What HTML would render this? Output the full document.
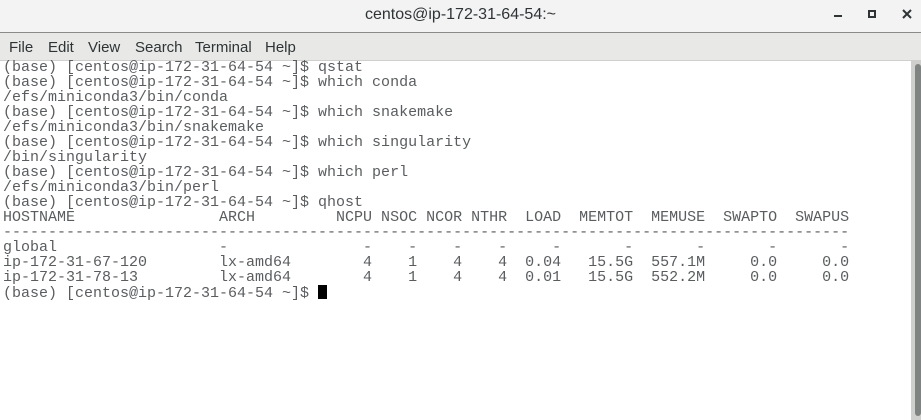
<!DOCTYPE html><html><head><style>
body{margin:0;width:921px;height:420px;overflow:hidden;background:#fff;position:relative;font-family:"Liberation Sans","DejaVu Sans",sans-serif}
.title{position:absolute;left:0;top:0;width:921px;height:32px;background:#f3f3f3;border-bottom:1px solid #8a8a88}
.title span{position:absolute;left:0;right:0;top:6px;text-align:center;font-size:16px;color:#2e3436}
.menu{position:absolute;top:33px;left:0;width:921px;height:27px;background:#e8e8e7;border-bottom:1px solid #cfcfcd}
.menu span{position:absolute;top:6px;font-size:15px;color:#2e3436}
pre{position:absolute;left:3px;top:60px;margin:0;font-family:"Liberation Mono",monospace;font-size:15px;line-height:15px;color:#5a5d5f}
.sb{position:absolute;left:911px;top:61px;width:10px;height:359px;background:#cfcfcd}
.th{position:absolute;left:915px;top:64px;width:6px;height:352px;background:#7f8381;border-radius:3px}
.cur{display:inline-block;width:9px;height:14px;background:#000;vertical-align:-2px}
</style></head><body>
<div class="title"><span>centos@ip-172-31-64-54:~</span>
<div style="position:absolute;left:834px;top:15px;width:8px;height:2px;background:#2e3436"></div>
<div style="position:absolute;left:868px;top:10px;width:4px;height:4px;border:2px solid #2e3436"></div>
<svg style="position:absolute;left:902px;top:9px" width="10" height="10"><path d="M1 1L9 9M9 1L1 9" stroke="#2e3436" stroke-width="2"/></svg>
</div>
<div class="menu"><span style="left:9px">File</span><span style="left:48px">Edit</span><span style="left:88px">View</span><span style="left:135px">Search</span><span style="left:195px">Terminal</span><span style="left:265px">Help</span></div>
<pre>(base) [centos@ip-172-31-64-54 ~]$ qstat
(base) [centos@ip-172-31-64-54 ~]$ which conda
/efs/miniconda3/bin/conda
(base) [centos@ip-172-31-64-54 ~]$ which snakemake
/efs/miniconda3/bin/snakemake
(base) [centos@ip-172-31-64-54 ~]$ which singularity
/bin/singularity
(base) [centos@ip-172-31-64-54 ~]$ which perl
/efs/miniconda3/bin/perl
(base) [centos@ip-172-31-64-54 ~]$ qhost
HOSTNAME                ARCH         NCPU NSOC NCOR NTHR  LOAD  MEMTOT  MEMUSE  SWAPTO  SWAPUS
----------------------------------------------------------------------------------------------
global                  -               -    -    -    -     -       -       -       -       -
ip-172-31-67-120        lx-amd64        4    1    4    4  0.04   15.5G  557.1M     0.0     0.0
ip-172-31-78-13         lx-amd64        4    1    4    4  0.01   15.5G  552.2M     0.0     0.0
(base) [centos@ip-172-31-64-54 ~]$ <span class="cur"></span></pre>
<div class="sb"></div><div class="th"></div>
</body></html>
